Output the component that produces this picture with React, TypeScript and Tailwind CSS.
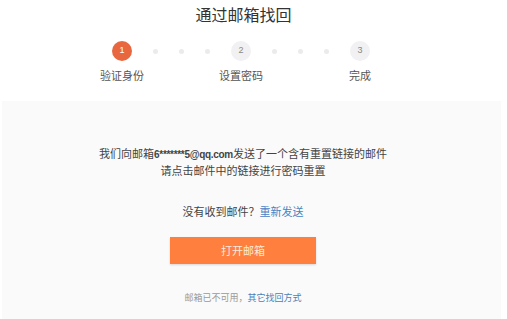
import React from "react";

const font = { fontFamily: '"Liberation Sans", "Noto Sans CJK SC", sans-serif' };

const Dots = () => (
  <>
    {[0, 1, 2].map((i) => (
      <span key={i} className="w-[5px] h-[5px] rounded-full bg-[#ebebeb]" />
    ))}
  </>
);

const Step = ({ n, label, active }: { n: number; label: string; active?: boolean }) => (
  <div className="relative w-[20px] flex flex-col items-center">
    <div
      className={
        active
          ? "w-[20px] h-[20px] rounded-full bg-[#e8673f] text-white text-[9px] flex items-center justify-center"
          : "w-[20px] h-[20px] rounded-full bg-[#f1f1f3] text-[#888] text-[9px] flex items-center justify-center"
      }
    >
      {n}
    </div>
    <div className="absolute top-[28px] whitespace-nowrap text-[11px] leading-[14px] text-[#555]">{label}</div>
  </div>
);

export default function App() {
  return (
    <div className="w-full h-[319px] bg-white overflow-hidden flex flex-col" style={font}>
      <h1 className="pt-[5px] pr-[20px] text-center text-[16px] leading-[22px] text-[#333]">通过邮箱找回</h1>

      <div className="mt-[14px] pl-[112px] flex items-center gap-[21px] h-[20px]">
        <Step n={1} label="验证身份" active />
        <Dots />
        <Step n={2} label="设置密码" />
        <Dots />
        <Step n={3} label="完成" />
      </div>

      <div className="mt-[40px] ml-[2px] mr-[6px] flex-1 bg-[#fafafa] flex flex-col items-center pt-[45px] pr-[17px] text-[11px] leading-[16px] text-[#444]">
        <p className="whitespace-nowrap">
          我们向邮箱<span className="font-bold text-[10px] tracking-[-0.3px]">6*******5@qq.com</span>发送了一个含有重置链接的邮件
        </p>
        <p>请点击邮件中的链接进行密码重置</p>

        <p className="mt-[25px]">
          没有收到邮件？<span className="text-[#4a82c2]">重新发送</span>
        </p>

        <button className="mt-[17px] w-[146px] h-[27px] bg-[#ff7f3e] text-[#fde9dc] text-[11px] shadow-[0_1px_2px_rgba(0,0,0,0.15)]">
          打开邮箱
        </button>

        <p className="mt-[27px] text-[9px] leading-[14px] text-[#999]">
          邮箱已不可用，<span className="text-[#4a7fb8]">其它找回方式</span>
        </p>
      </div>
    </div>
  );
}
